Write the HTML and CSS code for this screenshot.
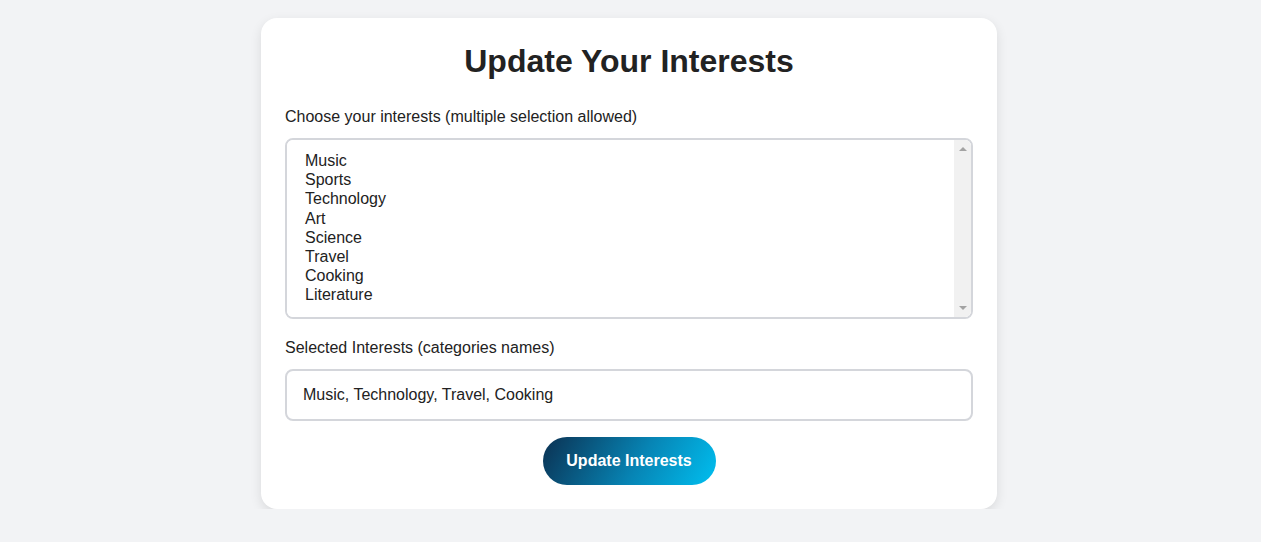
FILE: index.html
```html
<!DOCTYPE html>
<html lang="en">
<head>
<meta charset="utf-8">
<title>Update Your Interests</title>
<link rel="stylesheet" href="styles.css">
</head>
<body>
<main class="card">
  <h1 class="title">Update Your Interests</h1>
  <form class="form">
    <div class="group">
      <label class="label" for="interests">Choose your interests (multiple selection allowed)</label>
      <div class="listbox-wrap">
        <select id="interests" class="listbox" multiple>
          <option>Music</option>
          <option>Sports</option>
          <option>Technology</option>
          <option>Art</option>
          <option>Science</option>
          <option>Travel</option>
          <option>Cooking</option>
          <option>Literature</option>
        </select>
        <span class="scrollbar" aria-hidden="true">
          <span class="arrow arrow-up"></span>
          <span class="arrow arrow-down"></span>
        </span>
      </div>
    </div>
    <div class="group">
      <label class="label" for="selected">Selected Interests (categories names)</label>
      <input id="selected" class="field" type="text" value="Music, Technology, Travel, Cooking">
    </div>
    <div class="actions">
      <button type="button" class="btn">Update Interests</button>
    </div>
  </form>
</main>
</body>
</html>
```
FILE: styles.css
```css
* { box-sizing: border-box; }
html, body { margin: 0; }
body {
  background: #f2f3f5;
  font-family: "Liberation Sans", Arial, sans-serif;
  color: #222;
  padding: 18px 3px 0 0;
}
.card {
  width: 736px;
  margin: 0 auto;
  background: #fff;
  border-radius: 16px;
  box-shadow: 0 4px 12px rgba(0, 0, 0, 0.1);
  padding: 25px 24px 24px;
}
.title {
  margin: 0 0 28px;
  text-align: center;
  font-size: 32px;
  line-height: 37px;
  font-weight: 700;
  color: #222;
}
.form { display: flex; flex-direction: column; }
.group { display: flex; flex-direction: column; gap: 12px; margin-bottom: 20px; }
.group + .group { margin-bottom: 16px; }
.label { font-size: 16px; line-height: 18px; color: #222; }
.listbox-wrap { position: relative; display: flex; flex-direction: column; }
.listbox {
  height: 181px;
  border: 2px solid #d4d6db;
  border-radius: 8px;
  padding: 12px 20px 12px 18px;
  font-family: "Liberation Sans", Arial, sans-serif;
  font-size: 16px;
  color: #222;
  background: #fff;
  outline: none;
}
.listbox option { line-height: 19px; padding: 0; }
.scrollbar {
  position: absolute;
  top: 2px;
  bottom: 2px;
  right: 2px;
  width: 17px;
  background: #f1f1f1;
  border-radius: 0 6px 6px 0;
  display: flex;
  flex-direction: column;
  justify-content: space-between;
  align-items: center;
  padding: 7px 0;
}
.arrow {
  width: 0;
  height: 0;
  border-left: 4px solid transparent;
  border-right: 4px solid transparent;
}
.arrow-up { border-bottom: 4px solid #a3a3a3; }
.arrow-down { border-top: 4px solid #a3a3a3; }
.field {
  height: 52px;
  border: 2px solid #d4d6db;
  border-radius: 8px;
  padding: 0 16px;
  font-family: "Liberation Sans", Arial, sans-serif;
  font-size: 16px;
  color: #222;
  background: #fff;
  outline: none;
}
.actions { display: flex; justify-content: center; }
.btn {
  width: 173px;
  height: 48px;
  border: none;
  border-radius: 24px;
  background: linear-gradient(120deg, #0b3152 0%, #0784b4 55%, #00bff0 100%);
  color: #fff;
  font-family: "Liberation Sans", Arial, sans-serif;
  font-size: 16px;
  font-weight: 700;
  cursor: pointer;
}
```
